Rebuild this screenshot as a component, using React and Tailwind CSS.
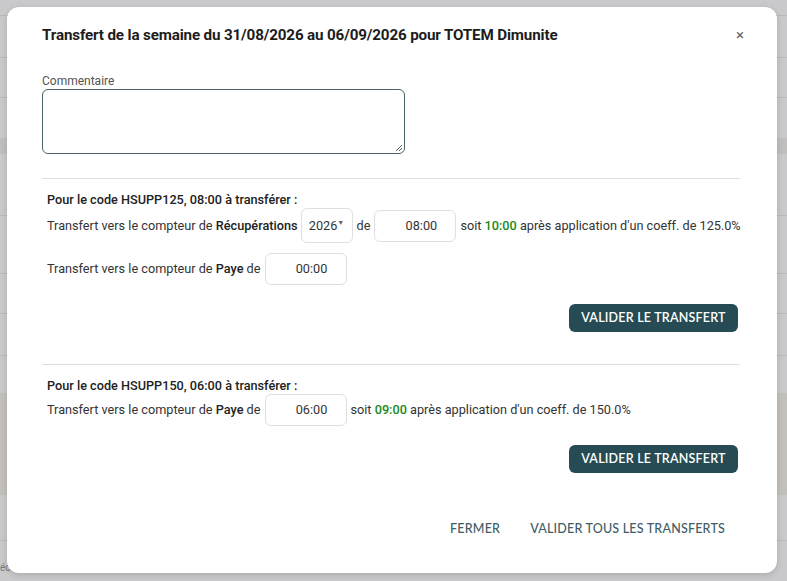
import React from "react";

const rows = [15, 57, 97, 215, 273, 313, 355, 540];

function TimeInput({ value }) {
  return (
    <div className="w-[82px] h-[32px] shrink-0 rounded-[6px] border border-[#e0e0e0] flex items-center justify-center pl-[12px] text-[12.7px] text-[#333]">
      {value}
    </div>
  );
}

function PrimaryButton() {
  return (
    <button className="w-[169px] h-[28px] rounded-[6px] bg-[#264b54] text-white text-[12.5px] font-semibold tracking-[0.2px] flex items-center justify-center" style={{ fontFamily: "Lato, 'Open Sans', sans-serif" }}>
      VALIDER LE TRANSFERT
    </button>
  );
}

export default function App() {
  return (
    <div className="relative w-[787px] h-[581px] overflow-hidden bg-[#c9c9cb]" style={{ fontFamily: "Roboto, 'Liberation Sans', sans-serif" }}>
      {/* underlying page (dimmed) */}
      <div className="absolute inset-0">
        {rows.map((y) => (
          <div key={y} className="absolute left-0 right-0 h-px bg-[#b9b9bb]" style={{ top: y }} />
        ))}
        <div className="absolute left-0 right-0 top-[138px] h-[16px] bg-[#c0bfbd]" />
        <div className="absolute left-0 right-0 top-[393px] h-[102px] bg-[#c3c0bb]" />
        <div className="absolute left-0 top-[560px] text-[10px] text-[#777]">éc</div>
      </div>

      {/* dialog */}
      <div className="absolute left-[7px] top-[7px] w-[770px] h-[566px] rounded-[12px] bg-white shadow-[0_2px_6px_rgba(0,0,0,0.15)] pl-[35px] pr-[37px] flex flex-col whitespace-nowrap">
        <div className="flex items-center justify-between pt-[14px] h-[42px]">
          <div className="text-[15.2px] font-bold text-[#1d1d1d] tracking-[-0.15px]">
            Transfert de la semaine du 31/08/2026 au 06/09/2026 pour TOTEM Dimunite
          </div>
          <div className="text-[15px] text-[#666] mr-[-4px] leading-none">×</div>
        </div>

        <div className="mt-[25px] text-[12px] leading-[14px] text-[#555]">Commentaire</div>
        <div className="relative mt-[1px] w-[363px] h-[65px] rounded-[6px] border border-[#4b636b]">
          <svg className="absolute right-[1px] bottom-[1px]" width="8" height="8" viewBox="0 0 8 8">
            <path d="M7 1L1 7M7 4L4 7" stroke="#555" strokeWidth="1" />
          </svg>
        </div>

        <div className="mt-[24px] h-px bg-[#dedede]" />

        {/* section 1 */}
        <div className="pl-[5px] text-[12.7px] text-[#333]">
          <div className="mt-[13px] font-medium text-[#222] leading-[16px]">Pour le code HSUPP125, 08:00 à transférer :</div>
          <div className="flex items-center h-[35px]">
            <span>Transfert vers le compteur de <span className="font-medium text-[#222]">Récupérations</span></span>
            <div className="ml-[3px] shrink-0 w-[52px] h-[35px] rounded-[6px] border border-[#e0e0e0] flex items-center justify-center text-[12.7px] text-[#333]">
              2026<span className="text-[7px] text-[#666] -mt-[5px]">▼</span>
            </div>
            <span className="ml-[4px]">de</span>
            <div className="ml-[4px]"><TimeInput value="08:00" /></div>
            <span className="ml-[4px]">soit <span className="font-medium text-[#1a8a1a]">10:00</span> après application d'un coeff. de 125.0%</span>
          </div>
          <div className="mt-[10px] flex items-center h-[32px]">
            <span>Transfert vers le compteur de <span className="font-medium text-[#222]">Paye</span> de</span>
            <div className="ml-[4px]"><TimeInput value="00:00" /></div>
          </div>
          <div className="mt-[19px] flex justify-end pr-[2px]">
            <PrimaryButton />
          </div>
        </div>

        <div className="mt-[32px] h-px bg-[#dedede]" />

        {/* section 2 */}
        <div className="pl-[5px] text-[12.7px] text-[#333]">
          <div className="mt-[13px] font-medium text-[#222] leading-[16px]">Pour le code HSUPP150, 06:00 à transférer :</div>
          <div className="flex items-center h-[32px]">
            <span>Transfert vers le compteur de <span className="font-medium text-[#222]">Paye</span> de</span>
            <div className="ml-[4px]"><TimeInput value="06:00" /></div>
            <span className="ml-[4px]">soit <span className="font-medium text-[#1a8a1a]">09:00</span> après application d'un coeff. de 150.0%</span>
          </div>
          <div className="mt-[19px] flex justify-end pr-[2px]">
            <PrimaryButton />
          </div>
        </div>

        <div className="mt-[42px] flex justify-end items-center gap-[14px] pr-[7px] text-[12.5px] text-[#3f5d66]" style={{ fontFamily: "Lato, 'Open Sans', sans-serif" }}>
          <button className="px-[8px] h-[28px] font-medium tracking-[0.2px]">FERMER</button>
          <button className="px-[8px] h-[28px] font-medium tracking-[0.2px]">VALIDER TOUS LES TRANSFERTS</button>
        </div>
      </div>
    </div>
  );
}
